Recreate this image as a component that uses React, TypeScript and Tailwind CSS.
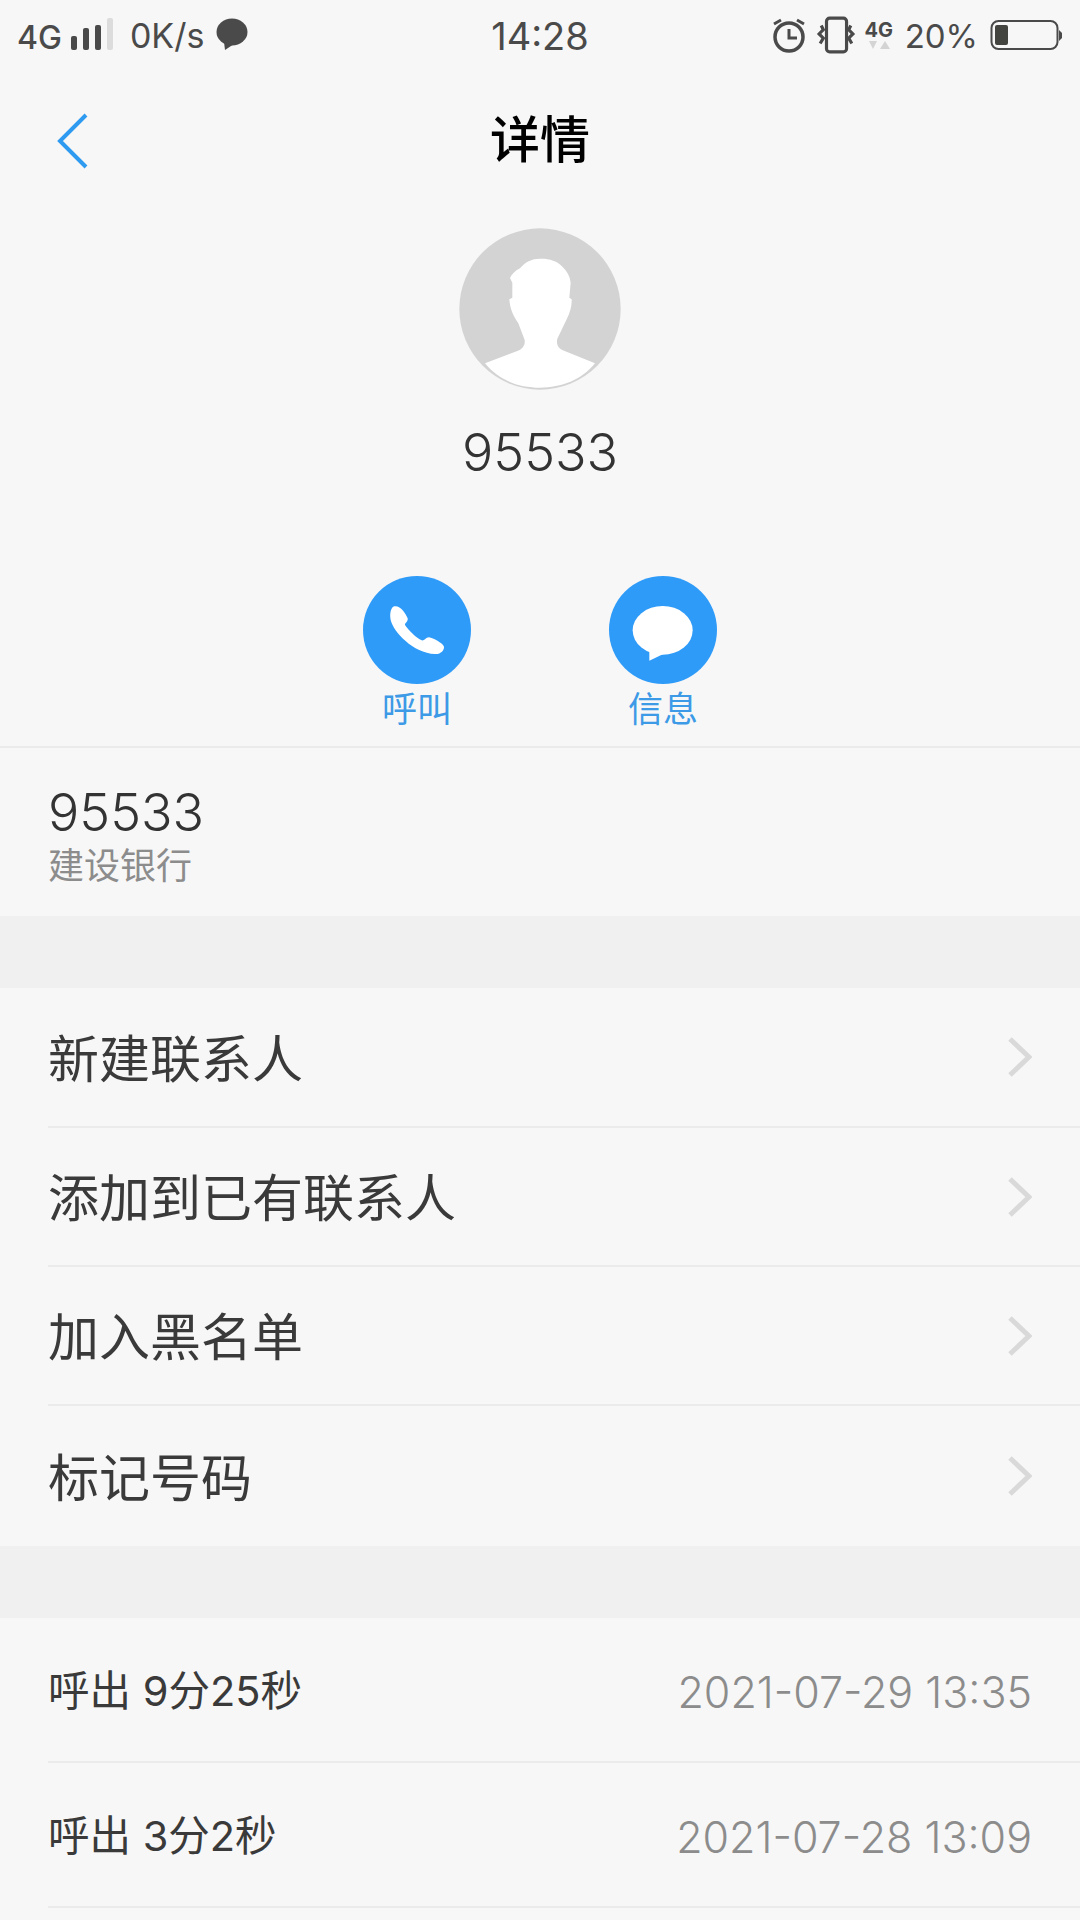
const menuItems = ['新建联系人', '添加到已有联系人', '加入黑名单', '标记号码'];

const callLogs = [
  { label: '呼出 9分25秒', time: '2021-07-29 13:35' },
  { label: '呼出 3分2秒', time: '2021-07-28 13:09' },
];

function StatusBar() {
  return (
    <div className="relative flex h-[70px] items-center justify-between pl-[17px] pr-[18px] text-[#4a4a4a]">
      <div className="flex items-center">
        <span className="text-[32px] leading-none font-medium mt-[6px]">4G</span>
        <div className="ml-[9px] mt-[-2px] flex items-end gap-[6px]">
          <span className="h-[14px] w-[6px] rounded-[2px] bg-[#4a4a4a]" />
          <span className="h-[22px] w-[6px] rounded-[2px] bg-[#4a4a4a]" />
          <span className="h-[25px] w-[6px] rounded-[2px] bg-[#4a4a4a]" />
          <span className="h-[32px] w-[6px] rounded-[2px] bg-[#dcdcdc]" />
        </div>
        <span className="ml-[17px] text-[34px] leading-none mt-[2px]">0K/s</span>
        <svg className="ml-[12px] mt-[-3px]" width="32" height="32" viewBox="0 0 32 32">
          <ellipse cx="16" cy="14" rx="15.5" ry="13.5" fill="#4a4a4a" />
          <path d="M8 24 L9 32 L18 26Z" fill="#4a4a4a" />
        </svg>
      </div>
      <span className="absolute left-0 right-0 text-center text-[38px] leading-none mt-[2px]">14:28</span>
      <div className="flex items-center">
        <svg width="34" height="36" viewBox="0 0 34 36" fill="none" stroke="#4a4a4a">
          <circle cx="17" cy="20" r="14" strokeWidth="3.5" />
          <path d="M17 12v9h8" strokeWidth="3" />
          <path d="M2 7l7-4M32 7l-7-4" strokeWidth="3" />
        </svg>
        <svg className="ml-[9px]" width="42" height="38" viewBox="0 0 38 36" fill="none" stroke="#4a4a4a" strokeWidth="3">
          <rect x="10" y="2" width="19" height="32" rx="3" />
          <path d="M5 9l2 4-4 4 4 4-3 5M33 9l-2 4 4 4-4 4 3 5" />
        </svg>
        <div className="ml-[8px] flex w-[28px] flex-col items-center">
          <span className="text-[20px] leading-[20px] font-bold">4G</span>
          <svg width="22" height="10" viewBox="0 0 22 10" fill="#d4d4d4">
            <path d="M1 1h8l-4 8zM12 9h10l-5-8z" />
          </svg>
        </div>
        <span className="ml-[12px] text-[33px] leading-none mt-[2px]">20%</span>
        <svg className="ml-[12px]" width="72" height="32" viewBox="0 0 72 32">
          <rect x="1.5" y="2" width="66" height="28" rx="7" fill="none" stroke="#4a4a4a" strokeWidth="2" />
          <rect x="5" y="6" width="13" height="20" rx="2" fill="#43433f" />
          <path d="M69 11l3 3v5l-3 3z" fill="#4a4a4a" />
        </svg>
      </div>
    </div>
  );
}

function Header() {
  return (
    <div className="relative flex h-[140px] items-center justify-center">
      <svg className="absolute left-[56px] top-[43px]" width="32" height="56" viewBox="0 0 32 56" fill="none">
        <path d="M30 2 L4 28 L30 54" stroke="#2f9bf0" strokeWidth="4" />
      </svg>
      <span className="text-[50px] leading-none font-medium text-black">详情</span>
    </div>
  );
}

function Avatar() {
  return (
    <svg width="162" height="162" viewBox="27 26 486 486">
      <circle cx="270" cy="269" r="242" fill="#d3d3d3" />
      <path
        d="M270 118 C295 117 322 124 338 143 C352 156 360 172 362 190 L358 235 L365 240 C366 260 360 280 350 300 L322 358 C318 375 325 388 342 394 L435 432 C395 482 335 505 270 505 C205 505 145 482 105 432 L200 396 C218 390 226 378 224 362 L205 312 C190 290 180 270 178 240 L187 235 L187 190 L180 176 C185 165 195 155 210 147 C225 128 245 118 270 118Z"
        fill="#ffffff"
      />
    </svg>
  );
}

function ContactActions() {
  return (
    <div className="flex h-[78px] justify-center gap-[138px]">
      <div className="flex w-[108px] flex-col items-center">
        <div className="flex h-[108px] w-[108px] shrink-0 items-center justify-center rounded-full bg-[#2f9bf8]">
          <svg width="108" height="108" viewBox="24 18 324 324">
            <path
              d="M118 109 C108 112 103 130 107 150 C115 185 175 250 240 252 C258 253 268 240 267 230 C262 218 235 205 222 202 C212 203 208 213 200 211 C185 205 160 180 150 165 C150 158 160 155 158 145 C152 130 135 105 118 109Z"
              fill="#ffffff"
            />
          </svg>
        </div>
        <span className="text-[35px] leading-[50px] text-[#3d9ae6]">呼叫</span>
      </div>
      <div className="flex w-[108px] flex-col items-center">
        <div className="flex h-[108px] w-[108px] shrink-0 items-center justify-center rounded-full bg-[#2f9bf8]">
          <svg width="108" height="108" viewBox="27 18 324 324">
            <ellipse cx="188" cy="181" rx="90" ry="73" fill="#ffffff" />
            <path d="M128 228 L148 240 L148 272 L190 252Z" fill="#ffffff" />
          </svg>
        </div>
        <span className="text-[35px] leading-[50px] text-[#3d9ae6]">信息</span>
      </div>
    </div>
  );
}

export default function App() {
  return (
    <div className="h-[1920px] w-[1080px] overflow-hidden bg-[#f7f7f7] font-['Inter','Noto_Sans_CJK_SC',sans-serif]">
      <StatusBar />
      <Header />

      <div className="flex flex-col items-center pt-[18px]">
        <Avatar />
        <span className="mt-[33px] text-[52px] leading-[60px] font-[350] text-[#333333]">95533</span>
      </div>

      <div className="mt-[93px]">
        <ContactActions />
      </div>

      <div className="mt-[92px] h-[170px] border-t-2 border-[#ebebeb] pl-[48px] pt-[33px]">
        <div className="text-[52px] leading-[63px] font-[350] text-[#333333]">95533</div>
        <div className="text-[36px] leading-[44px] text-[#8c8c8c]">建设银行</div>
      </div>

      <div className="h-[72px] bg-[#f0f0f0]" />

      <div>
        {menuItems.map((item, i) => (
          <div key={item} className="pl-[48px]">
            <div
              className={`flex items-center justify-between pr-[48px] ${
                i === 0 ? 'h-[140px] border-b-2 border-[#ebebeb]' : i < menuItems.length - 1 ? 'h-[139px] border-b-2 border-[#ebebeb]' : 'h-[140px]'
              }`}
            >
              <span className="mt-[4px] text-[51px] leading-none text-[#3a3a3a]">{item}</span>
              <svg width="25" height="42" viewBox="0 0 25 42" fill="none">
                <path d="M3 3 L22 21 L3 39" stroke="#d9d9d9" strokeWidth="5" />
              </svg>
            </div>
          </div>
        ))}
      </div>

      <div className="h-[72px] bg-[#f0f0f0]" />

      <div>
        {callLogs.map((log) => (
          <div key={log.time} className="pl-[48px]">
            <div className="flex h-[145px] items-center justify-between border-b-2 border-[#ebebeb] pr-[48px]">
              <span className="mt-[5px] text-[41.5px] leading-none text-[#3a3a3a]">{log.label}</span>
              <span className="mt-[5px] text-[43px] leading-none font-[350] text-[#8c8c8c]">{log.time}</span>
            </div>
          </div>
        ))}
      </div>
    </div>
  );
}
